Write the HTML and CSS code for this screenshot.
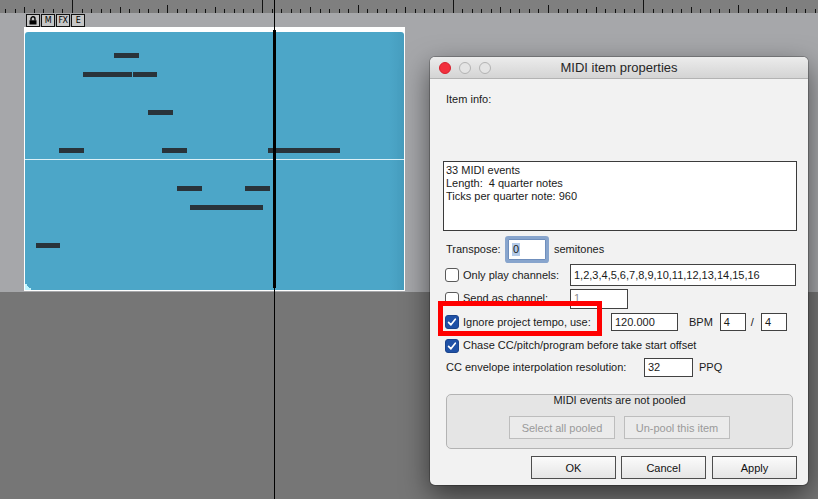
FILE: index.html
```html
<!DOCTYPE html>
<html lang="en">
<head>
    <meta charset="UTF-8">
    <title>MIDI item properties</title>
    <link rel="stylesheet" href="styles.css">
</head>
<body>
    <div class="daw">
        <div class="ruler">
            <svg id="ruler" width="818" height="13" shape-rendering="crispEdges"></svg>
        </div>
        <div class="track">
            <div class="item-buttons">
                <div class="item-btn">
                    <svg width="10" height="9" viewBox="0 0 10 9">
                        <path d="M3 4.5V2.8a2 2 0 0 1 4 0v1.7" stroke="#000" stroke-width="1.4" fill="none"/>
                        <rect x="1.5" y="4.3" width="7" height="4.2" fill="#000"/>
                    </svg>
                </div>
                <div class="item-btn">M</div>
                <div class="item-btn">FX</div>
                <div class="item-btn">E</div>
            </div>
            <div class="item">
                <div class="item-body">
                    <div class="midline"></div>
                    <div class="note" style="left:89px; top:21px; width:25px"></div>
                    <div class="note" style="left:58px; top:40px; width:49px"></div>
                    <div class="note" style="left:108px; top:40px; width:24px"></div>
                    <div class="note" style="left:123px; top:78px; width:25px"></div>
                    <div class="note" style="left:34px; top:116px; width:25px"></div>
                    <div class="note" style="left:137px; top:116px; width:25px"></div>
                    <div class="note" style="left:243px; top:116px; width:72px"></div>
                    <div class="note" style="left:152px; top:154px; width:25px"></div>
                    <div class="note" style="left:220px; top:154px; width:25px"></div>
                    <div class="note" style="left:165px; top:173px; width:73px"></div>
                    <div class="note" style="left:11px; top:211px; width:24px"></div>
                    <div class="fade"></div>
                </div>
            </div>
        </div>
        <div class="empty"></div>
    </div>
    <div class="cursor"></div>
    <div class="cursor-take"></div>

    <div class="dialog">
        <div class="titlebar">
            <div class="lights">
                <span class="light close"></span>
                <span class="light"></span>
                <span class="light"></span>
            </div>
            <div class="title">MIDI item properties</div>
            <div></div>
        </div>
        <div class="dlg-body">
            <div class="info-label">Item info:</div>
            <div class="info-box">
                <div>33 MIDI events</div>
                <div>Length:&nbsp; 4 quarter notes</div>
                <div>Ticks per quarter note: 960</div>
            </div>

            <div class="row r-transpose">
                <span class="lbl lbl-transpose">Transpose:</span>
                <span class="field f-transpose"><span class="sel">0</span></span>
                <span class="unit u-semi">semitones</span>
            </div>
            <div class="row r-channels">
                <span class="check"></span>
                <span class="lbl lbl-chk lbl-channels">Only play channels:</span>
                <span class="field f-channels">1,2,3,4,5,6,7,8,9,10,11,12,13,14,15,16</span>
            </div>
            <div class="row r-send">
                <span class="check"></span>
                <span class="lbl lbl-chk lbl-channels">Send as channel:</span>
                <span class="field f-send disabled">1</span>
            </div>
            <div class="row r-tempo">
                <span class="check on">
                    <svg width="12" height="12" viewBox="0 0 12 12"><path d="M2.6 6.4l2.3 2.4 4.4-5.6" stroke="#fff" stroke-width="1.7" fill="none" stroke-linecap="round" stroke-linejoin="round"/></svg>
                </span>
                <span class="lbl lbl-chk lbl-tempo">Ignore project tempo, use:</span>
                <span class="field f-bpm">120.000</span>
                <span class="unit u-bpm">BPM</span>
                <span class="field f-sig">4</span>
                <span class="unit u-slash">/</span>
                <span class="field f-sig">4</span>
            </div>
            <div class="row r-chase">
                <span class="check on">
                    <svg width="12" height="12" viewBox="0 0 12 12"><path d="M2.6 6.4l2.3 2.4 4.4-5.6" stroke="#fff" stroke-width="1.7" fill="none" stroke-linecap="round" stroke-linejoin="round"/></svg>
                </span>
                <span class="lbl lbl-chk">Chase CC/pitch/program before take start offset</span>
            </div>
            <div class="row r-cc">
                <span class="lbl lbl-cc">CC envelope interpolation resolution:</span>
                <span class="field f-cc">32</span>
                <span class="unit u-ppq">PPQ</span>
            </div>

            <div class="pool">
                <div class="pool-title">MIDI events are not pooled</div>
                <div class="pool-btns">
                    <div class="pool-btn">Select all pooled</div>
                    <div class="pool-btn">Un-pool this item</div>
                </div>
            </div>

            <div class="actions">
                <div class="btn">OK</div>
                <div class="btn">Cancel</div>
                <div class="btn btn-apply">Apply</div>
            </div>
        </div>
    </div>
    <div class="highlight"></div>

    <script>
        // ruler ticks: one bar = 190.4px, 20 small divisions per bar
        const ruler = document.getElementById("ruler");
        let ticks = "";
        for (let i = -7; i <= 78; i++) {
            const x = Math.round(72 + i * 190.4 / 20);
            const k = ((i % 20) + 20) % 20;
            let h = 4;
            if (k === 0) h = 13;
            else if (k === 10) h = 8;
            else if (k % 5 === 0) h = 6;
            ticks += '<rect x="' + x + '" y="' + (13 - h) + '" width="1" height="' + h + '" fill="#111"/>';
        }
        ruler.innerHTML = ticks;
    </script>
</body>
</html>
```

FILE: styles.css
```css
* {
    box-sizing: border-box;
}

body {
    margin: 0;
    width: 818px;
    height: 499px;
    overflow: hidden;
    position: relative;
    background-color: #767676;
    font-family: "Liberation Sans", Arial, sans-serif;
    font-size: 11px;
    color: #1a1a1a;
}

.daw {
    display: flex;
    flex-direction: column;
    height: 499px;
}

.ruler {
    flex: none;
    height: 13px;
    background-color: #7f7f7f;
}

.ruler svg {
    display: block;
}

.track {
    flex: none;
    height: 279px;
    padding: 1px 0 0 24px;
    background-color: #a6a7aa;
}

.item-buttons {
    display: flex;
    gap: 1px;
    height: 13px;
    margin-left: 2px;
}

.item-btn {
    width: 14px;
    height: 13px;
    border: 1px solid #111;
    background-color: #c6c6c6;
    display: flex;
    align-items: center;
    justify-content: center;
    font-family: "DejaVu Sans", sans-serif;
    font-size: 8px;
    letter-spacing: -0.5px;
    color: #000;
}

.item {
    width: 381px;
    height: 264px;
    padding: 5px 1px 1px 1px;
    background-color: #fff;
}

.item-body {
    position: relative;
    height: 100%;
    overflow: hidden;
    border-radius: 3px 3px 0 0;
    background: linear-gradient(to right, #4ca6c8 96%, #469dbe);
}

.midline {
    position: absolute;
    left: 0;
    right: 0;
    top: 127px;
    height: 1px;
    background-color: #dcf0f7;
}

.note {
    position: absolute;
    height: 5px;
    background-color: #29333a;
}

.fade {
    position: absolute;
    left: 0;
    bottom: 0;
    width: 7px;
    height: 7px;
    background: linear-gradient(45deg, #c2f6ff 50%, transparent 50%);
}

.empty {
    flex: 1;
    background-color: #767676;
}

.cursor {
    position: absolute;
    left: 274px;
    top: 0;
    width: 1px;
    height: 499px;
    background-color: #000;
}

.cursor-take {
    position: absolute;
    left: 273px;
    top: 30px;
    width: 3px;
    height: 258px;
    background-color: #000;
}

/* dialog window */
.dialog {
    position: absolute;
    left: 430px;
    top: 57px;
    width: 378px;
    height: 428px;
    overflow: hidden;
    border-radius: 5px;
    background-color: #f2f2f2;
    box-shadow: 0 0 0 1px rgba(0, 0, 0, 0.22), 0 10px 28px rgba(0, 0, 0, 0.55);
}

.titlebar {
    height: 22px;
    display: grid;
    grid-template-columns: 1fr auto 1fr;
    align-items: center;
    background: linear-gradient(#ececec, #d4d4d4);
    border-bottom: 1px solid #b3b3b3;
}

.lights {
    display: flex;
    gap: 8px;
    padding-left: 9px;
}

.light {
    width: 12px;
    height: 12px;
    border-radius: 50%;
    background-color: #e4e4e4;
    border: 1px solid #b2b2b2;
}

.light.close {
    background-color: #f2303d;
    border-color: #d5202d;
}

.title {
    font-size: 13px;
    color: #262626;
}

.dlg-body {
    padding: 14px 11px 0 13px;
}

.info-label {
    line-height: 13px;
    padding-left: 3px;
}

.info-box {
    margin-top: 55px;
    height: 70px;
    padding: 2px;
    line-height: 13px;
    border: 1px solid #3b3b3b;
    background-color: #fff;
}

.row {
    display: flex;
    align-items: center;
    line-height: 13px;
    white-space: nowrap;
}

.r-transpose { height: 27px; margin-top: 5px; }
.r-channels { height: 24px; }
.r-send { height: 23px; }
.r-tempo { height: 24px; }
.r-chase { height: 23px; }
.r-cc { height: 21px; }

.check {
    flex: none;
    width: 14px;
    height: 14px;
    margin-left: 2px;
    border: 1px solid #5a5a5a;
    border-radius: 3px;
    background-color: #fff;
    display: flex;
    align-items: center;
    justify-content: center;
}

.check.on {
    background-color: #1f51a6;
    border-color: #1a448c;
}

.lbl-chk {
    margin-left: 4px;
}

.lbl-transpose {
    width: 62px;
    margin-left: 3px;
}

.lbl-channels {
    width: 107px;
}

.lbl-tempo {
    width: 148px;
}

.lbl-cc {
    width: 198px;
    margin-left: 3px;
}

.field {
    flex: none;
    display: flex;
    align-items: center;
    padding: 0 3px;
    border: 1px solid #424242;
    background-color: #fff;
    color: #1a1a1a;
}

.field.disabled {
    color: #8c8c8c;
}

.f-transpose {
    width: 38px;
    height: 21px;
    border-color: #6f8fbd;
    box-shadow: 0 0 0 3px #88a5cd;
    border-radius: 1px;
}

.sel {
    background-color: #b5cbe8;
    padding: 0 1px;
}

.f-channels { width: 226px; height: 22px; }
.f-send { width: 58px; height: 20px; }
.f-bpm { width: 67px; height: 18px; }
.f-sig { width: 26px; height: 18px; margin-left: 7px; }
.f-cc { width: 49px; height: 19px; }

.u-semi { margin-left: 8px; }
.u-bpm { margin-left: 11px; }
.u-slash { margin-left: 5px; }
.u-slash + .f-sig { margin-left: 7px; }
.u-ppq { margin-left: 6px; }

.pool {
    margin: 16px 4px 0 3px;
    border: 1px solid #b3b3b3;
    border-radius: 5px;
    background-color: #e5e5e5;
    text-align: center;
}

.pool-title {
    line-height: 11px;
}

.pool-btns {
    display: flex;
    justify-content: center;
    gap: 9px;
    margin: 10px 0 9px;
}

.pool-btn {
    width: 106px;
    height: 23px;
    border: 1px solid #bdbdbd;
    background-color: #ebebeb;
    color: #9a9a9a;
    display: flex;
    align-items: center;
    justify-content: center;
}

.actions {
    display: flex;
    justify-content: flex-end;
    gap: 5px;
    margin-top: 7px;
}

.btn {
    width: 85px;
    height: 23px;
    border: 1px solid #4e4e4e;
    background: linear-gradient(#fbfbfb, #e5e5e5);
    display: flex;
    align-items: center;
    justify-content: center;
    color: #111;
}

.btn-apply {
    margin-left: 1px;
}

.highlight {
    position: absolute;
    left: 438px;
    top: 301px;
    width: 164px;
    height: 35px;
    border: 5px solid #ff0000;
}
```
